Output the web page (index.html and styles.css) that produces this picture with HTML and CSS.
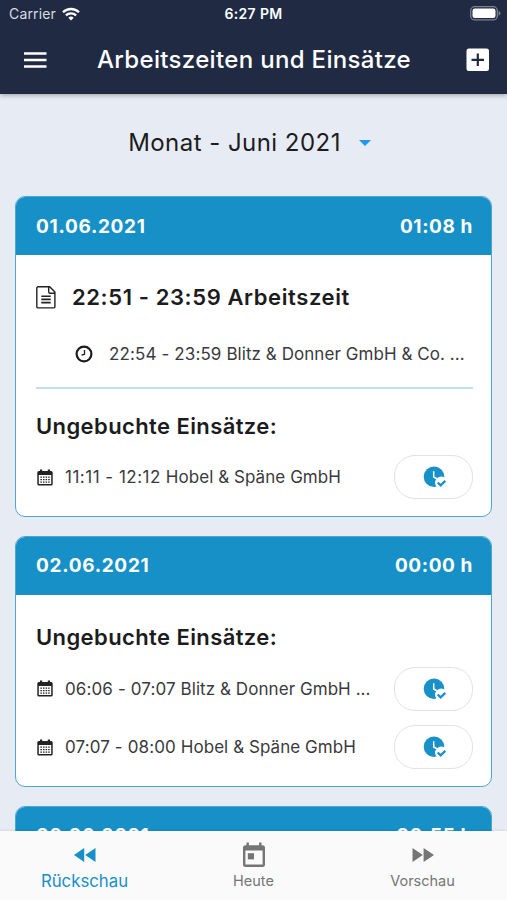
FILE: index.html
```html
<!DOCTYPE html>
<html lang="de">
<head>
    <meta charset="UTF-8">
    <meta name="viewport" content="width=device-width, initial-scale=1.0">
    <title>Arbeitszeiten und Einsätze</title>
    <link rel="stylesheet" href="styles.css">
</head>
<body>
    <!-- Icons -->
    <svg class="sprite" aria-hidden="true">
        <symbol id="icon-calendar" viewBox="0 0 16 17">
            <path d="M3 .5h2.200v1.500h5.600V.5H13V2h1.200A1.500 1.500 0 0 1 15.700 3.500v11.500a1.500 1.500 0 0 1-1.500 1.500H1.800A1.500 1.500 0 0 1 .3 15V3.500A1.500 1.500 0 0 1 1.800 2H3zM1.800 6v9h12.400V6z" fill="currentColor" fill-rule="evenodd"/>
            <path d="M3.400 8.100h9.800M3.400 10.600h9.800M3.400 13.100h9.800" stroke="currentColor" stroke-width="1.300" stroke-dasharray="1.500 1.100"/>
        </symbol>
        <symbol id="icon-clock-check" viewBox="0 0 24 22">
            <circle cx="11" cy="10.800" r="10.300" fill="#1890c8"/>
            <path d="M10.700 5.300v5.700l3.600 2" fill="none" stroke="#fff" stroke-width="1.500"/>
            <circle cx="18.300" cy="16.800" r="6.200" fill="#fff"/>
            <path d="M14.700 16.500l2.900 2.900 4.700-4.500" fill="none" stroke="#1890c8" stroke-width="2.200"/>
        </symbol>
    </svg>

    <header class="app-header">
        <div class="status-bar">
            <div class="carrier">
                <span>Carrier</span>
                <svg width="18" height="14" viewBox="0 0 18 14" fill="none" stroke="#fff" stroke-width="2.300">
                    <path d="M1 5.300a11.400 11.400 0 0 1 16 0M3.900 8.400a7.300 7.300 0 0 1 10.200 0"/>
                    <path d="M9 13.500L6.300 10.800a3.800 3.800 0 0 1 5.400 0z" fill="#fff" stroke="none"/>
                </svg>
            </div>
            <div class="clock">6:27 PM</div>
            <div class="battery">
                <svg width="31" height="15" viewBox="0 0 31 15">
                    <rect x=".7" y=".7" width="26.600" height="13.200" rx="4" fill="none" stroke="#7b8291" stroke-width="1.300"/>
                    <rect x="2.500" y="2.500" width="23" height="9.600" rx="2.300" fill="#fff"/>
                    <path d="M28.600 4.800q1.800.8 1.800 2.500t-1.800 2.500z" fill="#7b8291"/>
                </svg>
            </div>
        </div>
        <div class="title-bar">
            <button class="icon-btn" aria-label="Menü">
                <svg width="24" height="18" viewBox="0 0 24 18" stroke="#fff" stroke-width="2.300">
                    <path d="M1 2.500h22.500M1 9h22.500M1 15.500h22.500"/>
                </svg>
            </button>
            <h1>Arbeitszeiten und Einsätze</h1>
            <button class="icon-btn" aria-label="Hinzufügen">
                <svg width="24" height="24" viewBox="0 0 24 24">
                    <rect x=".5" y=".5" width="22.500" height="22.500" rx="2.500" fill="#fff"/>
                    <path d="M11.800 5.500V18M5.500 11.800h12.500" stroke="#202b43" stroke-width="2.200"/>
                </svg>
            </button>
        </div>
    </header>

    <main class="content">
        <div class="period">
            <span>Monat - Juni 2021</span>
            <svg width="12" height="6" viewBox="0 0 12 6"><path d="M0 0h12L6 6z" fill="#2196f3"/></svg>
        </div>

        <section class="card">
            <div class="card-header"><span class="date">01.06.2021</span><span class="total">01:08 h</span></div>
            <div class="card-body">
                <div class="worktime">
                    <svg width="20" height="23" viewBox="0 0 20 23" fill="none" stroke="#222" stroke-width="1.400">
                        <path d="M2 .8h11.700l5.200 5.300v14.700a1.100 1.100 0 0 1-1.100 1.100H2A1.200 1.200 0 0 1 .8 20.700V2A1.200 1.200 0 0 1 2 .8zM12.700 1v4.900a1.300 1.300 0 0 0 1.300 1.300h4.800"/>
                        <path d="M5.300 10.200h9.400M5.300 13.400h9.400M5.300 16.600h9.400" stroke-width="1.600"/>
                    </svg>
                    <span>22:51 - 23:59 Arbeitszeit</span>
                </div>
                <div class="booking">
                    <svg width="18" height="18" viewBox="0 0 18 18" fill="none" stroke="#1c1c1c">
                        <circle cx="9" cy="9" r="7.400" stroke-width="2.200"/>
                        <path d="M9.500 5v4.300L6.600 10" stroke-width="1.300"/>
                    </svg>
                    <span><span class="time">22:54 - 23:59</span> Blitz &amp; Donner GmbH &amp; Co. ...</span>
                </div>
                <hr class="divider">
                <h2>Ungebuchte Einsätze:</h2>
                <div class="job">
                    <svg class="job-icon"><use href="#icon-calendar"/></svg>
                    <span class="job-text"><span class="time narrow">11:11 - 12:12</span> Hobel &amp; Späne GmbH</span>
                    <button class="book-btn" aria-label="Buchen"><svg><use href="#icon-clock-check"/></svg></button>
                </div>
            </div>
        </section>

        <section class="card">
            <div class="card-header"><span class="date">02.06.2021</span><span class="total">00:00 h</span></div>
            <div class="card-body card-body-open">
                <h2>Ungebuchte Einsätze:</h2>
                <div class="job">
                    <svg class="job-icon"><use href="#icon-calendar"/></svg>
                    <span class="job-text"><span class="time">06:06 - 07:07</span> Blitz &amp; Donner GmbH ...</span>
                    <button class="book-btn" aria-label="Buchen"><svg><use href="#icon-clock-check"/></svg></button>
                </div>
                <div class="job">
                    <svg class="job-icon"><use href="#icon-calendar"/></svg>
                    <span class="job-text"><span class="time">07:07 - 08:00</span> Hobel &amp; Späne GmbH</span>
                    <button class="book-btn" aria-label="Buchen"><svg><use href="#icon-clock-check"/></svg></button>
                </div>
            </div>
        </section>

        <section class="card">
            <div class="card-header"><span class="date">03.06.2021</span><span class="total">00:55 h</span></div>
        </section>
    </main>

    <nav class="tab-bar">
        <a class="tab active">
            <svg width="22" height="24" viewBox="0 0 22 24" fill="currentColor"><path d="M10.200 5v14L0 12zM21.500 5v14L11.200 12z"/></svg>
            <span>Rückschau</span>
        </a>
        <a class="tab">
            <svg width="24" height="26" viewBox="0 0 24 26" fill="currentColor">
                <path d="M4.500 .5h2.400v2.800h10.200V.5h2.400v2.800h1a2.500 2.500 0 0 1 2.500 2.500v16.700a2.500 2.500 0 0 1-2.500 2.500h-17A2.500 2.500 0 0 1 1 22.500V5.800a2.500 2.500 0 0 1 2.500-2.500h1zM3.400 8.600v14h17.200v-14z" fill-rule="evenodd"/>
                <path d="M5.800 11.200h6.200v6.200H5.800z"/>
            </svg>
            <span>Heute</span>
        </a>
        <a class="tab">
            <svg width="22" height="24" viewBox="0 0 22 24" fill="currentColor"><path d="M.5 5v14l10.300-7zM11.600 5v14L22 12z"/></svg>
            <span>Vorschau</span>
        </a>
    </nav>
</body>
</html>
```

FILE: styles.css
```css
* {
    box-sizing: border-box;
}

body {
    margin: 0;
    height: 900px;
    display: flex;
    flex-direction: column;
    overflow: hidden;
    font-family: Inter, 'Liberation Sans', sans-serif;
    background: #e7ebf4;
    color: #1c1c1e;
    white-space: nowrap;
}

svg {
    display: block;
    flex: none;
}

.sprite {
    display: none;
}

button {
    padding: 0;
    border: 0;
    background: none;
}

.app-header {
    flex: none;
    height: 94px;
    background: #202b43;
    color: white;
    box-shadow: 0 1px 5px rgba(0, 0, 0, 0.35);
    z-index: 1;
}

.status-bar {
    height: 27px;
    padding: 0 6px 0 9px;
    display: grid;
    grid-template-columns: 1fr auto 1fr;
    align-items: center;
    font-size: 14px;
}

.carrier {
    display: flex;
    align-items: center;
    gap: 6px;
    color: #d9dce2;
    letter-spacing: 0.15px;
}

.clock {
    font-size: 14px;
    font-weight: 600;
    letter-spacing: 0.35px;
    margin-left: -3px;
}

.battery {
    justify-self: end;
}

.title-bar {
    height: 65px;
    padding: 0 17px 0 23px;
    display: flex;
    align-items: center;
    justify-content: space-between;
}

.title-bar h1 {
    margin: 0 5px 0 0;
    font-size: 24px;
    font-weight: 500;
    letter-spacing: 0.33px;
}

.content {
    flex: 1;
    min-height: 0;
    overflow: hidden;
    padding: 0 15px;
}

.period {
    height: 102px;
    padding: 0 8px 5px 0;
    display: flex;
    align-items: center;
    justify-content: center;
    gap: 18px;
    font-size: 24px;
    letter-spacing: 0.46px;
}

.card {
    margin-bottom: 19px;
    border: 1px solid #4ba8d4;
    border-radius: 10px;
    background: white;
    overflow: hidden;
}

.card-header {
    height: 58px;
    padding: 0 18px 0 20px;
    display: flex;
    align-items: center;
    justify-content: space-between;
    background: #1790c8;
    color: white;
    font-size: 19px;
    font-weight: 700;
}

.card-header .date {
    letter-spacing: 0.7px;
}

.card-header .total {
    letter-spacing: 0.6px;
}

.card-body {
    padding: 0 18px 9px 20px;
}

.card-body-open {
    padding: 21px 18px 10px 20px;
}

.worktime {
    height: 84px;
    display: flex;
    align-items: center;
    gap: 16px;
    font-size: 22px;
    font-weight: 600;
    letter-spacing: 0.6px;
}

.booking {
    height: 30px;
    padding-left: 39px;
    display: flex;
    align-items: center;
    gap: 16px;
    font-size: 17px;
    letter-spacing: 0.06px;
    color: #3a3a3c;
}

.time {
    letter-spacing: 0.12px;
}

.time.narrow {
    letter-spacing: 0.5px;
}

.divider {
    height: 2px;
    margin: 18px 0 16px;
    border: 0;
    background: #c0dfee;
}

.card-body h2 {
    margin: 0;
    font-size: 22px;
    font-weight: 600;
    line-height: 43px;
    letter-spacing: 0.4px;
}

.job {
    height: 58.5px;
    display: flex;
    align-items: center;
    font-size: 17px;
    letter-spacing: 0.06px;
    color: #3a3a3c;
}

.card-body-open .job {
    padding-top: 2px;
}

.job-icon {
    width: 16px;
    height: 17px;
    margin: 0 12px 0 1px;
    color: #222;
}

.job-text {
    flex: 1;
}

.book-btn {
    width: 79px;
    height: 44px;
    display: flex;
    align-items: center;
    justify-content: center;
    border: 1.5px solid #e2e2e4;
    border-radius: 21px;
}

.book-btn svg {
    width: 24px;
    height: 22px;
    margin-left: 2px;
}

.tab-bar {
    flex: none;
    height: 69px;
    display: grid;
    grid-template-columns: repeat(3, 1fr);
    background: #fafafa;
    box-shadow: 0 -1px 2px rgba(0, 0, 0, 0.08);
    z-index: 1;
}

.tab {
    padding-top: 10px;
    display: flex;
    flex-direction: column;
    align-items: center;
    color: #757575;
    font-size: 14.5px;
}

.tab svg {
    height: 28px;
}

.tab span {
    line-height: 24px;
}

.tab.active {
    color: #1790c8;
    font-size: 16.8px;
}
```
